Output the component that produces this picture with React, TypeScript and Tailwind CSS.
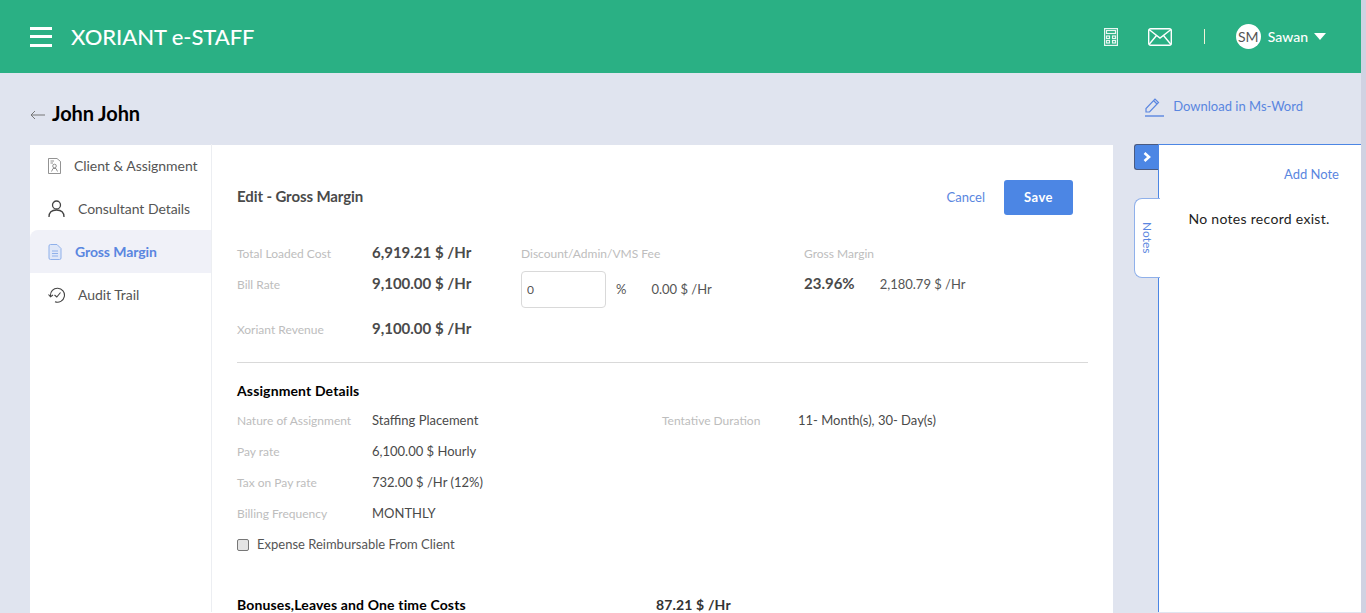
import React from "react";

const Label = ({ children, className = "" }: { children: React.ReactNode; className?: string }) => (
  <span className={`text-[12px] text-[#bdbdbd] ${className}`}>{children}</span>
);

const Row = ({ label, value }: { label: string; value: string }) => (
  <div className="flex h-[31px] items-center">
    <Label className="w-[135px]">{label}</Label>
    <span className="text-[13px] text-[#4a4a4a]">{value}</span>
  </div>
);

const Big = ({ label, value, className = "" }: { label: string; value: string; className?: string }) => (
  <div className={`flex items-center ${className}`}>
    <Label className="mt-[3px] w-[135px]">{label}</Label>
    <span className="text-[15px] font-bold text-[#4a4a4a]">{value}</span>
  </div>
);

const NavItem = ({ icon, label, active, textClass }: { icon: React.ReactNode; label: string; active?: boolean; textClass: string }) => (
  <div className={`flex h-[43px] items-center pl-[18px] text-[14px] ${active ? "rounded-tl-lg bg-[#f0f1f8] font-bold tracking-[-0.1px] text-[#5a86e0]" : "tracking-[-0.05px] text-[#555]"}`}>
    <span className="flex w-[18px] justify-start">{icon}</span>
    <span className={textClass}>{label}</span>
  </div>
);

export default function App() {
  return (
    <div className="flex h-[613px] overflow-hidden bg-[#e0e4ef] font-['Lato','Liberation_Sans',sans-serif]">
      <div className="flex min-w-0 flex-1 flex-col">
        <header className="flex h-[73px] shrink-0 items-center bg-[#2ab084] pl-[30px] text-white">
          <div className="flex w-[22px] flex-col gap-[5.5px]">
            <span className="h-[3px] bg-white" />
            <span className="h-[3px] bg-white" />
            <span className="h-[3px] bg-white" />
          </div>
          <span className="ml-[19px] text-[22px] font-medium leading-none tracking-[-0.07px]">XORIANT e-STAFF</span>
          <div className="ml-auto flex items-center pr-[35px]">
            <svg width="14" height="18" viewBox="0 0 14 18" fill="none" stroke="#fff" strokeWidth="1.2" opacity="0.9">
              <rect x="0.6" y="0.6" width="12.8" height="16.8" />
              <rect x="2.5" y="2.5" width="9" height="3" />
              <rect x="2.5" y="8" width="3" height="2.5" />
              <rect x="8.5" y="8" width="3" height="2.5" />
              <rect x="2.5" y="12.5" width="3" height="2.5" />
              <rect x="8.5" y="12.5" width="3" height="2.5" />
            </svg>
            <svg className="ml-[30px]" width="24" height="18" viewBox="0 0 24 18" fill="none" stroke="#fff" strokeWidth="1.4">
              <rect x="0.7" y="0.7" width="22.6" height="16.6" rx="2" />
              <path d="M1 1.5 L12 10 L23 1.5 M1 16.5 L8.5 7.5 M23 16.5 L15.5 7.5" />
            </svg>
            <span className="ml-[32px] h-[15px] w-[1px] bg-[#f2f2d8]" />
            <span className="ml-[31px] flex h-[25px] w-[25px] items-center justify-center rounded-full bg-white text-[14px] text-[#555]">SM</span>
            <span className="ml-[7px] text-[14px] font-medium">Sawan</span>
            <span className="ml-[6px] h-0 w-0 border-x-[6.5px] border-t-[7px] border-x-transparent border-t-white" />
          </div>
        </header>

        <div className="flex h-[72px] shrink-0 items-start pl-[30px]">
          <div className="flex items-center pt-[26px]">
            <svg className="mt-[3px]" width="15" height="10" viewBox="0 0 15 10" fill="none" stroke="#777" strokeWidth="1">
              <path d="M15 5 H1 M5 1 L1 5 L5 9" />
            </svg>
            <span className="ml-[7px] text-[20px] font-bold leading-[28px] tracking-[-0.1px] text-black">John John</span>
          </div>
          <div className="ml-auto flex items-center pr-[58px] pt-[24px] text-[13px] text-[#5a86e0]">
            <svg width="19" height="20" viewBox="0 0 19 20" fill="none" stroke="#5a86e0" strokeWidth="1.2">
              <path d="M1 15 V11.5 L10 2 L13.5 5.5 L4.5 15 Z M8.5 3.5 L12 7" />
              <path d="M0 19 H19" strokeWidth="1.4" />
            </svg>
            <span className="ml-[9px]">Download in Ms-Word</span>
          </div>
        </div>

        <div className="flex min-h-0 flex-1 pl-[30px]">
          <main className="flex w-[1083px] shrink-0 bg-white">
            <nav className="w-[182px] shrink-0 -translate-y-px border-r border-[#eceef2]">
              <NavItem
                textClass="ml-[8px]"
                label="Client & Assignment"
                icon={
                  <svg width="13" height="16" viewBox="0 0 13 16" fill="none" stroke="#777" strokeWidth="0.8">
                    <path d="M0.5 0.5 H9 L12.5 3.5 V15.5 H0.5 Z" />
                    <path d="M2.5 3 H6 M2.5 5 H5" />
                    <circle cx="6.5" cy="8" r="1.8" />
                    <path d="M3.5 13.5 L5 10.5 H8 L9.5 13.5" />
                  </svg>
                }
              />
              <NavItem
                textClass="ml-[12px]"
                label="Consultant Details"
                icon={
                  <svg width="17" height="17" viewBox="0 0 17 17" fill="none" stroke="#444" strokeWidth="1.3">
                    <circle cx="8.5" cy="5" r="4" />
                    <path d="M1 17 C1 12 4 10 8.5 10 C13 10 16 12 16 17" />
                  </svg>
                }
              />
              <NavItem
                active
                textClass="ml-[9px]"
                label="Gross Margin"
                icon={
                  <svg width="14" height="16" viewBox="0 0 14 16" fill="#dfe7f8" stroke="#8fb0ea" strokeWidth="1">
                    <path d="M1 2 Q1 0.5 2.5 0.5 H9 L13 4.5 V14 Q13 15.5 11.5 15.5 H2.5 Q1 15.5 1 14 Z" />
                    <path d="M4 7 H10 M4 9.5 H10 M4 12 H10" />
                  </svg>
                }
              />
              <NavItem
                textClass="ml-[12px]"
                label="Audit Trail"
                icon={
                  <svg width="18" height="16" viewBox="0 0 18 16" fill="none" stroke="#444" strokeWidth="1.1">
                    <path d="M2.5 9 A7 7 0 1 1 7 14.8" />
                    <path d="M0.5 7.5 L2.5 9.8 L5 8" />
                    <path d="M6.5 8 L8.8 10 L12.5 5.5" />
                  </svg>
                }
              />
            </nav>

            <section className="min-w-0 flex-1 pl-[25px] pr-[25px]">
              <div className="flex h-[70px] items-center pr-[15px] pt-[35px]">
                <h2 className="mb-[2px] text-[15px] font-bold tracking-[-0.1px] text-[#4a4a4a]">Edit - Gross Margin</h2>
                <span className="ml-auto text-[13px] text-[#5a86e0]">Cancel</span>
                <button className="ml-[19px] h-[35px] w-[69px] rounded-[3px] bg-[#4c86e4] text-[13px] font-bold tracking-[0.5px] text-white">Save</button>
              </div>

              <div className="mt-[27px] flex h-[121px] border-b border-[#d9d9d9]">
                <div className="w-[284px] shrink-0">
                  <Big label="Total Loaded Cost" value="6,919.21 $ /Hr" className="h-[20px]" />
                  <Big label="Bill Rate" value="9,100.00 $ /Hr" className="mt-[11px] h-[20px]" />
                  <Big label="Xoriant Revenue" value="9,100.00 $ /Hr" className="mt-[25px] h-[20px]" />
                </div>
                <div className="w-[283px] shrink-0">
                  <Label className="block h-[20px] leading-[24px]">Discount/Admin/VMS Fee</Label>
                  <div className="mt-[9px] flex items-center">
                    <input readOnly value="0" className="h-[37px] w-[85px] rounded-[4px] border border-[#d9d9d9] px-[5px] text-[12px] text-[#555]" />
                    <span className="ml-[10px] text-[13px] text-[#555]">%</span>
                    <span className="ml-[25px] text-[13px] text-[#555]">0.00 $ /Hr</span>
                  </div>
                </div>
                <div>
                  <Label className="block h-[20px] leading-[24px]">Gross Margin</Label>
                  <div className="mt-[11px] flex h-[20px] items-center">
                    <span className="text-[15px] font-bold text-[#4a4a4a]">23.96%</span>
                    <span className="ml-[25px] mt-[4px] text-[13px] text-[#555]">2,180.79 $ /Hr</span>
                  </div>
                </div>
              </div>

              <h3 className="mt-[18px] text-[14px] font-bold leading-[20px] tracking-[0.13px] text-black">Assignment Details</h3>
              <div className="mt-[4px] flex">
                <div className="w-[425px] shrink-0">
                  <Row label="Nature of Assignment" value="Staffing Placement" />
                  <Row label="Pay rate" value="6,100.00 $ Hourly" />
                  <Row label="Tax on Pay rate" value="732.00 $ /Hr (12%)" />
                  <Row label="Billing Frequency" value="MONTHLY" />
                  <label className="flex h-[31px] items-center">
                    <input type="checkbox" className="h-[12px] w-[12px] appearance-none rounded-[2px] border border-[#777] bg-[#e4e4e4]" />
                    <span className="ml-[8px] text-[13px] text-[#555]">Expense Reimbursable From Client</span>
                  </label>
                </div>
                <div className="flex h-[31px] items-center">
                  <Label className="w-[136px]">Tentative Duration</Label>
                  <span className="text-[13px] text-[#4a4a4a]">11- Month(s), 30- Day(s)</span>
                </div>
              </div>

              <div className="mt-[37px] flex text-[14px] font-bold leading-[16px] tracking-[0.15px]">
                <span className="w-[419px] text-black">Bonuses,Leaves and One time Costs</span>
                <span className="text-[#333]">87.21 $ /Hr</span>
              </div>
            </section>
          </main>

          <aside className="ml-[21px] flex min-w-0 flex-1 -translate-y-px">
            <div className="relative z-10 flex w-[24px] shrink-0 flex-col">
              <button className="flex h-[26px] w-[24px] items-center justify-center rounded-l-[3px] border border-r-0 border-[#4a5a80] bg-[#4c86e4]">
                <svg width="8" height="10" viewBox="0 0 8 10" fill="none" stroke="#fff" strokeWidth="2.6">
                  <path d="M1.5 1 L6 5 L1.5 9" />
                </svg>
              </button>
              <div className="mt-[28px] flex h-[80px] w-[26px] items-center justify-center rounded-l-[8px] border border-r-0 border-[#8fb0ea] bg-white pr-[2px]">
                <span className="text-[12px] text-[#5a86e0] [writing-mode:vertical-rl]">Notes</span>
              </div>
            </div>
            <div className="min-w-0 flex-1 border-l border-t border-[#4c86e4] bg-white">
              <div className="mt-[20px] pr-[22px] text-right text-[13px] leading-[18px] text-[#5a86e0]">Add Note</div>
              <div className="mt-[26px] pr-[2px] text-center text-[14px] leading-[20px] tracking-[0.3px] text-[#222]">No notes record exist.</div>
            </div>
          </aside>
        </div>
      </div>
      <div className="w-[5px] shrink-0 bg-[#d0d2e2]" />
    </div>
  );
}
